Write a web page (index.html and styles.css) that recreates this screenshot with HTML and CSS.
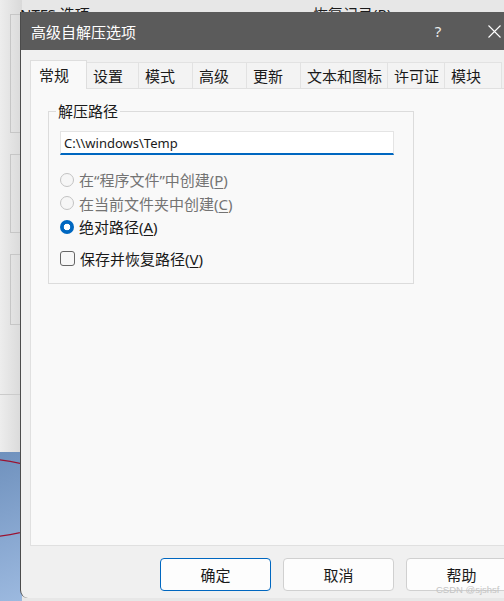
FILE: index.html
```html
<!DOCTYPE html>
<html lang="zh-CN">
<head>
<meta charset="utf-8">
<title>高级自解压选项</title>
<link rel="stylesheet" href="styles.css">
</head>
<body>
<div class="desk">
  <div class="bg-left"></div>
  <div class="bg-top">
    <span class="bg-label bg-label-ntfs">NTFS 选项</span>
    <span class="bg-label bg-label-restore">恢复记录(R)</span>
  </div>
  <div class="bg-box bg-box-1"></div>
  <div class="bg-box bg-box-2"></div>
  <div class="bg-box bg-box-3"></div>
  <div class="bg-rule"></div>
  <div class="bg-photo">
    <svg width="20" height="149" viewBox="0 0 20 149"><ellipse cx="-60" cy="46" rx="141" ry="42" fill="none" stroke="#9b1230" stroke-width="1.3"/></svg>
  </div>

  <div class="dialog">
    <div class="titlebar">
      <span class="title">高级自解压选项</span>
      <span class="help">?</span>
      <span class="close"><svg width="13" height="13" viewBox="0 0 13 13"><path d="M0.5 0.5L12.5 12.5M12.5 0.5L0.5 12.5" stroke="#ffffff" stroke-width="1.1" fill="none"/></svg></span>
    </div>
    <div class="body">
      <div class="tabs">
        <span class="tab tab-active w57">常规</span>
        <span class="tab w52">设置</span>
        <span class="tab w54">模式</span>
        <span class="tab w54">高级</span>
        <span class="tab w54">更新</span>
        <span class="tab w87">文本和图标</span>
        <span class="tab w57">许可证</span>
        <span class="tab w57">模块</span>
      </div>
      <div class="panel">
        <fieldset class="group">
          <legend class="group-title">解压路径</legend>
          <input class="path" type="text" value="C:\\windows\Temp">
          <label class="opt opt-first disabled"><input class="radio" type="radio" name="p" disabled><span>在“程序文件”中创建(<u>P</u>)</span></label>
          <label class="opt disabled"><input class="radio" type="radio" name="p" disabled><span>在当前文件夹中创建(<u>C</u>)</span></label>
          <label class="opt"><input class="radio" type="radio" name="p" checked><span>绝对路径(<u>A</u>)</span></label>
          <label class="opt opt-check"><input class="check" type="checkbox"><span>保存并恢复路径(<u>V</u>)</span></label>
        </fieldset>
      </div>
      <div class="buttons">
        <button class="btn btn-default">确定</button>
        <button class="btn">取消</button>
        <button class="btn">帮助</button>
      </div>
    </div>
  </div>

  <div class="watermark">CSDN @sjshsf</div>
</div>
</body>
</html>
```

FILE: styles.css
```css
html, body {
  margin: 0;
  padding: 0;
}
body {
  width: 504px;
  height: 601px;
  overflow: hidden;
  background: #e7e7e7;
  font-family: "Noto Sans", "Noto Sans CJK SC", sans-serif;
}
.desk {
  position: relative;
  width: 504px;
  height: 601px;
  overflow: hidden;
}
.bg-left {
  position: absolute;
  left: 0;
  top: 0;
  width: 22px;
  height: 601px;
  background: linear-gradient(to right, #ededed, #d9d9d9);
}
.bg-top {
  position: absolute;
  left: 0;
  top: 0;
  width: 504px;
  height: 12px;
  overflow: hidden;
}
.bg-label {
  position: absolute;
  top: 6px;
  font-size: 15px;
  line-height: 16px;
  color: #1b1b1b;
  white-space: nowrap;
}
.bg-label-ntfs { left: 20px; }
.bg-label-restore { left: 313px; }
.bg-box {
  position: absolute;
  left: 10px;
  width: 30px;
  border: 1px solid #c6c6c6;
}
.bg-box-1 { top: 14px; height: 117px; }
.bg-box-2 { top: 154px; height: 77px; }
.bg-box-3 { top: 254px; height: 69px; }
.bg-rule {
  position: absolute;
  left: 0;
  top: 394px;
  width: 22px;
  border-top: 1px solid #cbcbcb;
}
.bg-photo {
  position: absolute;
  left: 0;
  top: 452px;
  width: 22px;
  height: 149px;
  background: linear-gradient(160deg, #6f91bd, #8aa9d2 60%, #9cb9df);
}
.bg-photo svg { display: block; }

.dialog {
  position: absolute;
  left: 20px;
  top: 12px;
  width: 507px;
  height: 586px;
  box-sizing: border-box;
  background: #f0f0f0;
  border-left: 1px solid #4b4b4b;
  border-bottom-left-radius: 8px;
  overflow: hidden;
  display: flex;
  flex-direction: column;
}
.titlebar {
  height: 38px;
  flex: none;
  background: #5b5b5b;
  color: #ffffff;
  display: flex;
  align-items: center;
  padding: 0 10px;
}
.title {
  flex: 1;
  font-size: 15px;
  line-height: 20px;
  margin-top: 1px;
}
.help {
  width: 30px;
  text-align: center;
  font-size: 15px;
  line-height: 20px;
  color: #eeeeee;
}
.close {
  width: 46px;
  margin-left: 18px;
  display: flex;
  justify-content: center;
  align-items: center;
}
.close svg { display: block; }

.body {
  padding: 10px 9px 0 9px;
  display: flex;
  flex-direction: column;
}
.tabs {
  display: flex;
  align-items: flex-end;
  height: 29px;
  margin-bottom: -1px;
}
.tab {
  flex: none;
  box-sizing: border-box;
  height: 27px;
  padding-left: 6px;
  font-size: 15px;
  line-height: 26px;
  color: #1a1a1a;
  background: #f3f3f3;
  border: 1px solid #e2e2e2;
  border-left: none;
  white-space: nowrap;
}
.tab-active {
  position: relative;
  z-index: 1;
  height: 29px;
  padding-left: 8px;
  line-height: 28px;
  background: #f9f9f9;
  border: 1px solid #dedede;
  border-bottom: none;
}
.w52 { width: 52px; }
.w54 { width: 54px; }
.w57 { width: 57px; }
.w87 { width: 87px; }

.panel {
  box-sizing: border-box;
  height: 458px;
  background: #f9f9f9;
  border: 1px solid #e0e0e0;
  margin-right: -20px;
}
.group {
  box-sizing: border-box;
  width: 366px;
  margin: 12px 0 0 17px;
  padding: 0 18px 12px 11px;
  border: 1px solid #dcdcdc;
  display: flex;
  flex-direction: column;
  align-items: flex-start;
}
.group-title {
  margin-left: -4px;
  padding: 0 2px;
  font-size: 15px;
  line-height: 20px;
  color: #1a1a1a;
}
.path {
  box-sizing: border-box;
  width: 334px;
  height: 24px;
  margin: 0;
  margin-top: 10px;
  padding: 0 3px;
  border: 1px solid #e4e4e4;
  border-bottom: 2px solid #0067c0;
  background: #ffffff;
  font-family: "Noto Sans", sans-serif;
  font-size: 13px;
  color: #1a1a1a;
  outline: none;
}
.opt {
  display: flex;
  align-items: center;
  height: 23.5px;
  font-size: 15px;
  color: #1a1a1a;
  white-space: nowrap;
}
.opt-first { margin-top: 13px; }
.opt-check { margin-top: 8.5px; }
.opt.disabled { color: #737373; }
.opt u { text-underline-offset: 2px; }
.radio {
  appearance: none;
  -webkit-appearance: none;
  box-sizing: border-box;
  width: 14px;
  height: 14px;
  margin: 0 5px 0 0;
  border-radius: 50%;
  border: 1px solid #c3c3c3;
  background: #f6f6f6;
}
.radio:checked {
  border: none;
  background: radial-gradient(circle, #ffffff 0 3px, #0067c0 3.6px);
}
.check {
  appearance: none;
  -webkit-appearance: none;
  box-sizing: border-box;
  width: 15px;
  height: 15px;
  margin: 0 5px 0 0;
  border: 1px solid #666666;
  border-radius: 3px;
  background: #f7f7f7;
}

.buttons {
  display: flex;
  justify-content: flex-end;
  gap: 12px;
  margin-top: 12px;
  margin-right: 1px;
}
.btn {
  box-sizing: border-box;
  width: 111px;
  height: 33px;
  margin: 0;
  padding: 0;
  border: 1px solid #d0d0d0;
  border-radius: 4px;
  background: #fdfdfd;
  font-family: "Noto Sans", "Noto Sans CJK SC", sans-serif;
  font-size: 15px;
  color: #1a1a1a;
}
.btn-default {
  border-color: #0067c0;
}

.watermark {
  position: absolute;
  left: 436px;
  top: 584px;
  font-family: "Liberation Sans", sans-serif;
  font-size: 9.5px;
  line-height: 12px;
  color: #c4c4c4;
  white-space: nowrap;
}
```
